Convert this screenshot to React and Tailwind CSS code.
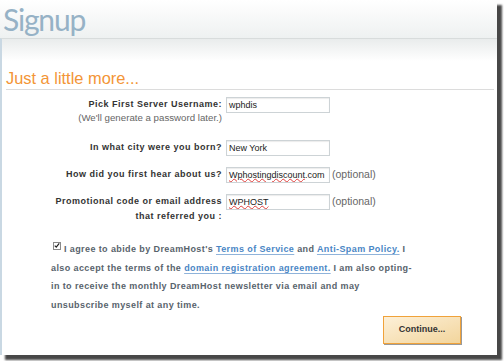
import React from "react";

const Field = ({ children }) => (
  <div className="w-[104px] h-[16px] border border-[#cdd3d6] bg-white shadow-[inset_0_1px_1px_rgba(0,0,0,0.08)] pl-[2px] text-[9px] leading-[14px] text-[#222] whitespace-nowrap overflow-hidden">
    {children}
  </div>
);

const Squiggle = ({ children }) => (
  <span className="underline decoration-wavy decoration-[#e0403c] decoration-[1px] underline-offset-[0px]">{children}</span>
);

const Link = ({ children }) => (
  <span className="text-[#4a86c5] underline decoration-[#8fb3da] underline-offset-[2px]">{children}</span>
);

export default function App() {
  return (
    <div className="w-[504px] h-[361px] bg-white overflow-hidden font-['Liberation_Sans',Arial,sans-serif]">
      <div className="w-[497px] h-[355px] bg-white flex flex-col shadow-[5px_5px_2px_rgba(0,0,0,0.72)]">
        <div className="h-[38px] bg-gradient-to-b from-white to-[#eef1f1] pl-[3px]">
          <div className="font-['Lato',sans-serif] font-normal text-[30px] leading-[37px] tracking-[-1.2px] text-[#96b2c6] pt-[1px]">
            Signup
          </div>
        </div>
        <div className="flex-1 border-t border-[#d8dcdc] border-l-2 border-l-[#c9d8e3] bg-gradient-to-b from-[#e9ecec] via-white via-[22px] to-white">
          <div className="mt-[30px] ml-[4px] w-[488px] h-[21px] border-b border-[#dcdcdc] text-[16.4px] leading-[19px] text-[#f39536]">
            Just a little more...
          </div>

          <div className="mt-[7px] flex items-start">
            <div className="w-[220px] text-right leading-[14px]">
              <div className="text-[9px] font-bold tracking-[0.5px] text-[#333]">Pick First Server Username:</div>
              <div className="text-[9.7px] text-[#666]">(We'll generate a password later.)</div>
            </div>
            <div className="ml-[4px]">
              <Field>wphdis</Field>
            </div>
          </div>

          <div className="mt-[15px] flex items-start">
            <div className="w-[220px] text-right leading-[15px] text-[9px] font-bold tracking-[0.5px] text-[#333]">
              In what city were you born?
            </div>
            <div className="ml-[4px]">
              <Field>New York</Field>
            </div>
          </div>

          <div className="mt-[11px] flex items-start">
            <div className="w-[220px] text-right leading-[15px] text-[9px] font-bold tracking-[0.5px] text-[#333]">
              How did you first hear about us?
            </div>
            <div className="ml-[4px]">
              <Field>
                <Squiggle>Wphostingdiscount</Squiggle>.com
              </Field>
            </div>
            <div className="ml-[2px] text-[10.5px] leading-[14px] text-[#666]">(optional)</div>
          </div>

          <div className="mt-[11px] flex items-start">
            <div className="w-[220px] text-right leading-[15px] text-[9px] font-bold tracking-[0.5px] text-[#333]">
              <div>Promotional code or email address</div>
              <div>that referred you :</div>
            </div>
            <div className="ml-[4px]">
              <Field>
                <Squiggle>WPHOST</Squiggle>
              </Field>
            </div>
            <div className="ml-[2px] text-[10.5px] leading-[14px] text-[#666]">(optional)</div>
          </div>

          <div className="mt-[16px] ml-[49px] text-[9px] font-bold tracking-[0.4px] leading-[18.7px] text-[#58636c] whitespace-nowrap">
            <div>
              <span className="relative top-[1.5px] inline-block align-top w-[8px] h-[8px] ml-[2px] mr-[3px] border border-[#8a8a8a] bg-white">
                <svg viewBox="0 0 8 8" className="w-[6px] h-[6px]">
                  <path d="M1 3.5 L3 5.5 L7 0.5" stroke="#222" strokeWidth="1.6" fill="none" />
                </svg>
              </span>
              I agree to abide by DreamHost's <Link>Terms of Service</Link> and <Link>Anti-Spam Policy.</Link> I
            </div>
            <div>
              also accept the terms of the <Link>domain registration agreement.</Link> I am also opting-
            </div>
            <div>in to receive the monthly DreamHost newsletter via email and may</div>
            <div>unsubscribe myself at any time.</div>
          </div>

          <div className="ml-[381px]">
            <button className="w-[78px] h-[28px] border border-[#f0a23a] bg-gradient-to-br from-[#fdf0d8] to-[#f2d59c] shadow-[1px_1px_0_#9a9a9a] text-[9px] font-bold text-[#333] font-['Liberation_Sans',Arial,sans-serif]">
              Continue...
            </button>
          </div>
        </div>
      </div>
    </div>
  );
}
